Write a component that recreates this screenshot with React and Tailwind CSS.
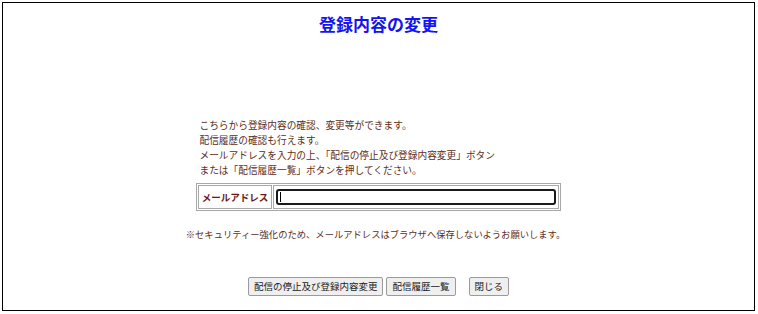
import React from 'react'

const font = { fontFamily: '"Noto Sans CJK JP", "Noto Sans", sans-serif' }

const Btn = ({ children }) => (
    <button className='h-[19px] px-[5px] bg-[#efefef] border border-[#9a9a9a] rounded-[2px] text-[9.5px] leading-none text-[#222]'>
        {children}
    </button>
)

const App = () => {
    return (
        <div style={font} className='bg-white w-[758px] h-[314px] pt-[2px] pl-[2px]'>
            <div className='w-[753px] h-[309px] border border-black flex flex-col items-center'>
                <h1 className='mt-[9px] text-[17px] leading-[24px] font-bold text-[#1414f2]'>登録内容の変更</h1>

                {/* description */}
                <div className='w-[364px] mt-[82px] pl-[3px] text-[9.7px] leading-[15px] text-[#5c2e1a]'>
                    <p>こちらから登録内容の確認、変更等ができます。</p>
                    <p>配信履歴の確認も行えます。</p>
                    <p>メールアドレスを入力の上、「配信の停止及び登録内容変更」ボタン</p>
                    <p>または「配信履歴一覧」ボタンを押してください。</p>
                </div>

                <div className='w-[365px] h-[28px] mt-[5px] border border-[#a8a8a8] p-[1px] flex gap-[1px]'>
                    <div className='w-[74px] border border-[#a8a8a8] flex items-center justify-center text-[9.5px] font-bold text-[#6b1a1a]'>
                        メールアドレス
                    </div>
                    <div className='flex-1 border border-[#a8a8a8] flex items-center px-[2px]'>
                        <div className='w-full h-[16px] border-2 border-[#1a1a1a] rounded-[3px] flex items-center pl-[2px]'>
                            <span className='w-px h-[10px] bg-black'></span>
                        </div>
                    </div>
                </div>

                <p className='mt-[16px] mr-[6px] text-[9.3px] leading-[15px] text-[#5c2e1a]'>
                    ※セキュリティー強化のため、メールアドレスはブラウザへ保存しないようお願いします。
                </p>

                <div className='mt-[35px] flex items-center gap-[13px]'>
                    <div className='flex gap-[3px]'>
                        <Btn>配信の停止及び登録内容変更</Btn>
                        <Btn>配信履歴一覧</Btn>
                    </div>
                    <Btn>閉じる</Btn>
                </div>
            </div>
        </div>
    )
}

export default App
